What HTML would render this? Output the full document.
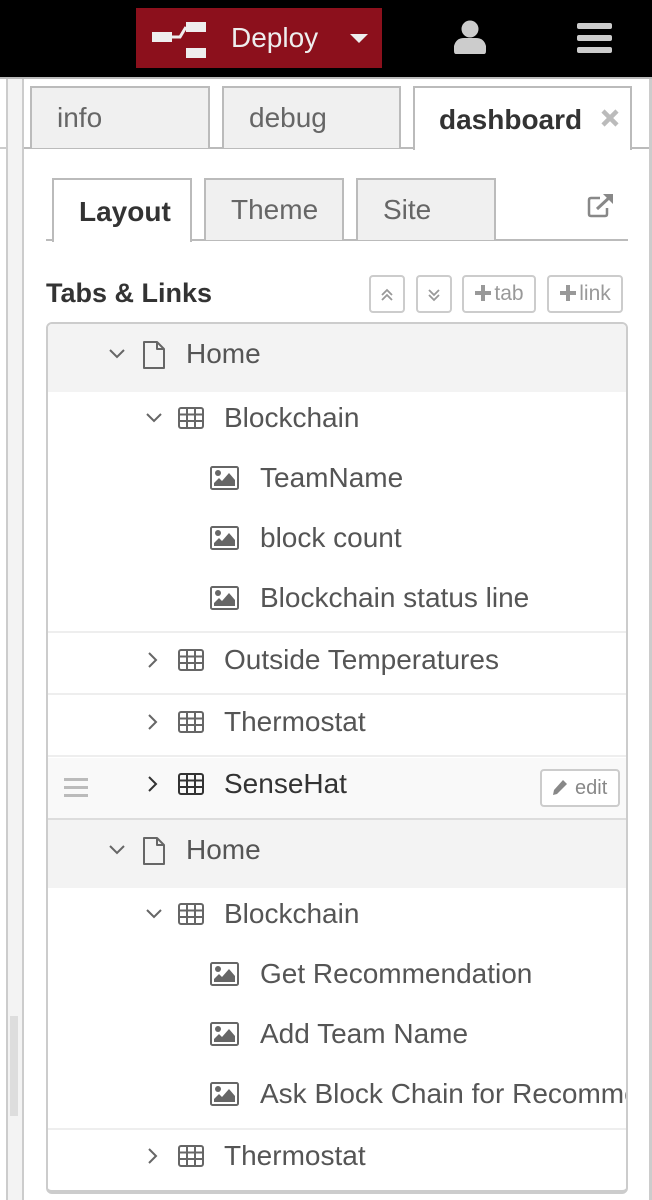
<!DOCTYPE html>
<html><head><meta charset="utf-8"><style>
*{margin:0;padding:0;box-sizing:border-box}
body{width:652px;height:1200px;overflow:hidden;background:#fff;font-family:"Liberation Sans",Arial,sans-serif;position:relative;color:#555}
.a{position:absolute}
.t{position:absolute;height:32px;line-height:32px;font-size:28px;color:#555;white-space:nowrap}
.tab{position:absolute;background:#f0f0f0;border:2px solid #bbb;border-bottom:none;font-size:28px;color:#666;line-height:60px}
.btn{position:absolute;top:275px;height:38px;border:2px solid #ccc;border-radius:4px;background:#fff;color:#999;font-size:21px;line-height:34px;text-align:center}
.sep{position:absolute;left:48px;width:578px;height:2px;background:#eee}
</style></head><body>
<div class="a" style="left:0;top:0;width:652px;height:77px;background:#000"></div>
<div class="a" style="left:0;top:77px;width:652px;height:2px;background:#bbb"></div>
<div class="a" style="left:136px;top:8px;width:246px;height:60px;background:#8c101c"></div>
<svg class="a" style="left:150px;top:20px" width="60" height="40" viewBox="0 0 60 40"><rect x="2" y="12" width="20" height="10" fill="#eee"/><rect x="36" y="2" width="20" height="10" fill="#eee"/><rect x="36" y="28" width="20" height="10" fill="#eee"/><path d="M22 17 L30 17 L36 7" stroke="#eee" stroke-width="3" fill="none"/></svg>
<div class="a" style="left:231px;top:20px;font-size:28px;color:#eee;line-height:36px">Deploy</div>
<svg class="a" style="left:349px;top:33px" width="20" height="12"><path d="M1 1 L19 1 L10 10 Z" fill="#eee"/></svg>
<svg class="a" style="left:454px;top:20px" width="32" height="36" viewBox="0 0 32 36"><circle cx="16" cy="9" r="8.5" fill="#ccc"/><path d="M2 34 Q0 34 0 31 L0 26 Q2 18 10 18 L22 18 Q30 18 32 26 L32 31 Q32 34 30 34 Z" fill="#ccc"/></svg>
<div class="a" style="left:577px;top:23px;width:35px;height:6px;background:#ccc;border-radius:2px"></div>
<div class="a" style="left:577px;top:35px;width:35px;height:6px;background:#ccc;border-radius:2px"></div>
<div class="a" style="left:577px;top:47px;width:35px;height:6px;background:#ccc;border-radius:2px"></div>
<div class="a" style="left:6px;top:79px;width:2px;height:1121px;background:#ccc"></div>
<div class="a" style="left:8px;top:79px;width:14px;height:1121px;background:#f3f3f3"></div>
<div class="a" style="left:22px;top:79px;width:2px;height:1121px;background:#ccc"></div>
<div class="a" style="left:0;top:147px;width:6px;height:2px;background:#ccc"></div>
<div class="a" style="left:10px;top:1016px;width:8px;height:100px;background:#ddd"></div>
<div class="a" style="left:649px;top:79px;width:3px;height:1121px;background:#ccc"></div>
<div class="a" style="left:24px;top:147px;width:625px;height:2px;background:#bbb"></div>
<div class="tab" style="left:30px;top:86px;width:180px;height:62px;padding-left:25px">info</div>
<div class="tab" style="left:222px;top:86px;width:179px;height:62px;padding-left:25px">debug</div>
<div class="tab" style="left:413px;top:86px;width:219px;height:64px;padding-left:24px;background:#fff;color:#333;font-weight:bold;line-height:64px">dashboard</div>
<svg class="a" style="left:600px;top:108px" width="20" height="20"><path d="M3 3 L17 17 M17 3 L3 17" stroke="#bbb" stroke-width="4.5"/></svg>
<div class="a" style="left:46px;top:239px;width:582px;height:2px;background:#bbb"></div>
<div class="tab" style="left:52px;top:178px;width:140px;height:64px;background:#fff;color:#333;font-weight:bold;padding-left:25px;line-height:64px">Layout</div>
<div class="tab" style="left:204px;top:178px;width:140px;height:62px;padding-left:25px">Theme</div>
<div class="tab" style="left:356px;top:178px;width:140px;height:62px;padding-left:25px">Site</div>
<svg class="a" style="left:587px;top:193px" width="28" height="26" viewBox="0 0 28 26"><path d="M13 5 L4 5 Q2 5 2 7 L2 21 Q2 23 4 23 L18 23 Q20 23 20 21 L20 15" stroke="#888" stroke-width="2.5" fill="none"/><path d="M10 16 L24 3" stroke="#888" stroke-width="3"/><path d="M16 1 L26 1 L26 11 Z" fill="#888"/></svg>
<div class="a" style="left:46px;top:277px;font-size:27px;font-weight:bold;color:#333;line-height:32px">Tabs &amp; Links</div>
<div class="btn" style="left:369px;width:36px"><svg width="14" height="16" style="margin-top:10px" viewBox="0 0 14 16"><path d="M2 8 L7 3 L12 8 M2 13 L7 8 L12 13" stroke="#999" stroke-width="1.8" fill="none"/></svg></div>
<div class="btn" style="left:416px;width:36px"><svg width="14" height="16" style="margin-top:10px" viewBox="0 0 14 16"><path d="M2 3 L7 8 L12 3 M2 8 L7 13 L12 8" stroke="#999" stroke-width="1.8" fill="none"/></svg></div>
<div class="btn" style="left:462px;width:74px"><svg width="18" height="18" style="vertical-align:-2px;margin-right:2px"><path d="M9 1V17M1 9H17" stroke="#999" stroke-width="4"/></svg>tab</div>
<div class="btn" style="left:547px;width:76px"><svg width="18" height="18" style="vertical-align:-2px;margin-right:2px"><path d="M9 1V17M1 9H17" stroke="#999" stroke-width="4"/></svg>link</div>
<div class="a" style="left:46px;top:322px;width:582px;height:872px;border:2px solid #ccc;border-bottom-width:4px;border-radius:6px;overflow:hidden">
<div class="a" style="left:0;top:0;width:578px;height:68px;background:#f3f3f3"></div>
<div class="a" style="left:0;top:434px;width:578px;height:62px;background:#f9f9f9;border-bottom:2px solid #ddd"></div>
<div class="a" style="left:0;top:496px;width:578px;height:68px;background:#f3f3f3"></div>
</div>
<div class="sep" style="top:631px"></div>
<div class="sep" style="top:693px"></div>
<div class="sep" style="top:755px"></div>
<div class="sep" style="top:1128px"></div>

<svg class="a" style="left:108px;top:348px" width="18" height="12"><path d="M2 2 L9 9 L16 2" stroke="#666" stroke-width="2" fill="none"/></svg>
<svg class="a" style="left:142px;top:340px" width="24" height="30" viewBox="0 0 24 30"><path d="M2 2 L15 2 L22 9 L22 28 L2 28 Z M15 2 L15 9 L22 9" stroke="#666" stroke-width="2" fill="none" stroke-linejoin="round"/></svg>
<div class="t" style="left:186px;top:338px">Home</div>
<svg class="a" style="left:145px;top:412px" width="18" height="12"><path d="M2 2 L9 9 L16 2" stroke="#666" stroke-width="2" fill="none"/></svg>
<svg class="a" style="left:178px;top:407px" width="26" height="22" viewBox="0 0 26 22"><rect x="1" y="1" width="24" height="20" rx="2" stroke="#666" stroke-width="2" fill="none"/><path d="M1 7.5H25M1 14H25M9 1V21M17 1V21" stroke="#666" stroke-width="2"/></svg>
<div class="t" style="left:224px;top:402px">Blockchain</div>
<svg class="a" style="left:210px;top:466px" width="29" height="24" viewBox="0 0 29 24"><rect x="1" y="1" width="27" height="22" rx="1.5" stroke="#666" stroke-width="2" fill="none"/><circle cx="8" cy="7" r="3" fill="#666"/><path d="M4 20 L4 17 L9 12 L12 15 L19 7 L25 14 L25 20 Z" fill="#666"/></svg>
<div class="t" style="left:260px;top:462px">TeamName</div>
<svg class="a" style="left:210px;top:526px" width="29" height="24" viewBox="0 0 29 24"><rect x="1" y="1" width="27" height="22" rx="1.5" stroke="#666" stroke-width="2" fill="none"/><circle cx="8" cy="7" r="3" fill="#666"/><path d="M4 20 L4 17 L9 12 L12 15 L19 7 L25 14 L25 20 Z" fill="#666"/></svg>
<div class="t" style="left:260px;top:522px">block count</div>
<svg class="a" style="left:210px;top:586px" width="29" height="24" viewBox="0 0 29 24"><rect x="1" y="1" width="27" height="22" rx="1.5" stroke="#666" stroke-width="2" fill="none"/><circle cx="8" cy="7" r="3" fill="#666"/><path d="M4 20 L4 17 L9 12 L12 15 L19 7 L25 14 L25 20 Z" fill="#666"/></svg>
<div class="t" style="left:260px;top:582px">Blockchain status line</div>
<svg class="a" style="left:147px;top:651px" width="12" height="18"><path d="M2 2 L9 9 L2 16" stroke="#666" stroke-width="2" fill="none"/></svg>
<svg class="a" style="left:178px;top:649px" width="26" height="22" viewBox="0 0 26 22"><rect x="1" y="1" width="24" height="20" rx="2" stroke="#666" stroke-width="2" fill="none"/><path d="M1 7.5H25M1 14H25M9 1V21M17 1V21" stroke="#666" stroke-width="2"/></svg>
<div class="t" style="left:224px;top:644px">Outside Temperatures</div>
<svg class="a" style="left:147px;top:713px" width="12" height="18"><path d="M2 2 L9 9 L2 16" stroke="#666" stroke-width="2" fill="none"/></svg>
<svg class="a" style="left:178px;top:711px" width="26" height="22" viewBox="0 0 26 22"><rect x="1" y="1" width="24" height="20" rx="2" stroke="#666" stroke-width="2" fill="none"/><path d="M1 7.5H25M1 14H25M9 1V21M17 1V21" stroke="#666" stroke-width="2"/></svg>
<div class="t" style="left:224px;top:706px">Thermostat</div>
<div class="a" style="left:64px;top:778px;width:24px;height:3px;background:#bbb"></div>
<div class="a" style="left:64px;top:786px;width:24px;height:3px;background:#bbb"></div>
<div class="a" style="left:64px;top:794px;width:24px;height:3px;background:#bbb"></div>
<svg class="a" style="left:147px;top:775px" width="12" height="18"><path d="M2 2 L9 9 L2 16" stroke="#333" stroke-width="2" fill="none"/></svg>
<svg class="a" style="left:178px;top:773px" width="26" height="22" viewBox="0 0 26 22"><rect x="1" y="1" width="24" height="20" rx="2" stroke="#333" stroke-width="2" fill="none"/><path d="M1 7.5H25M1 14H25M9 1V21M17 1V21" stroke="#333" stroke-width="2"/></svg>
<div class="t" style="left:224px;top:768px;color:#333">SenseHat</div>
<div class="a" style="left:540px;top:769px;width:80px;height:38px;border:2px solid #ccc;border-radius:4px;background:#fff;font-size:20px;line-height:34px;color:#888;padding-left:33px">edit</div>
<svg class="a" style="left:551px;top:777px" width="18" height="20" viewBox="0 0 18 20"><path d="M2 18 L3 13 L12 3 L16 7 L6 17 Z" fill="#888"/></svg>
<svg class="a" style="left:108px;top:844px" width="18" height="12"><path d="M2 2 L9 9 L16 2" stroke="#666" stroke-width="2" fill="none"/></svg>
<svg class="a" style="left:142px;top:836px" width="24" height="30" viewBox="0 0 24 30"><path d="M2 2 L15 2 L22 9 L22 28 L2 28 Z M15 2 L15 9 L22 9" stroke="#666" stroke-width="2" fill="none" stroke-linejoin="round"/></svg>
<div class="t" style="left:186px;top:834px">Home</div>
<svg class="a" style="left:145px;top:908px" width="18" height="12"><path d="M2 2 L9 9 L16 2" stroke="#666" stroke-width="2" fill="none"/></svg>
<svg class="a" style="left:178px;top:903px" width="26" height="22" viewBox="0 0 26 22"><rect x="1" y="1" width="24" height="20" rx="2" stroke="#666" stroke-width="2" fill="none"/><path d="M1 7.5H25M1 14H25M9 1V21M17 1V21" stroke="#666" stroke-width="2"/></svg>
<div class="t" style="left:224px;top:898px">Blockchain</div>
<svg class="a" style="left:210px;top:962px" width="29" height="24" viewBox="0 0 29 24"><rect x="1" y="1" width="27" height="22" rx="1.5" stroke="#666" stroke-width="2" fill="none"/><circle cx="8" cy="7" r="3" fill="#666"/><path d="M4 20 L4 17 L9 12 L12 15 L19 7 L25 14 L25 20 Z" fill="#666"/></svg>
<div class="t" style="left:260px;top:958px">Get Recommendation</div>
<svg class="a" style="left:210px;top:1022px" width="29" height="24" viewBox="0 0 29 24"><rect x="1" y="1" width="27" height="22" rx="1.5" stroke="#666" stroke-width="2" fill="none"/><circle cx="8" cy="7" r="3" fill="#666"/><path d="M4 20 L4 17 L9 12 L12 15 L19 7 L25 14 L25 20 Z" fill="#666"/></svg>
<div class="t" style="left:260px;top:1018px">Add Team Name</div>
<svg class="a" style="left:210px;top:1082px" width="29" height="24" viewBox="0 0 29 24"><rect x="1" y="1" width="27" height="22" rx="1.5" stroke="#666" stroke-width="2" fill="none"/><circle cx="8" cy="7" r="3" fill="#666"/><path d="M4 20 L4 17 L9 12 L12 15 L19 7 L25 14 L25 20 Z" fill="#666"/></svg>
<div class="a" style="left:260px;top:1078px;width:366px;height:32px;overflow:hidden"><div class="t" style="position:static">Ask Block Chain for Recommendation</div></div>
<svg class="a" style="left:147px;top:1147px" width="12" height="18"><path d="M2 2 L9 9 L2 16" stroke="#666" stroke-width="2" fill="none"/></svg>
<svg class="a" style="left:178px;top:1145px" width="26" height="22" viewBox="0 0 26 22"><rect x="1" y="1" width="24" height="20" rx="2" stroke="#666" stroke-width="2" fill="none"/><path d="M1 7.5H25M1 14H25M9 1V21M17 1V21" stroke="#666" stroke-width="2"/></svg>
<div class="t" style="left:224px;top:1140px">Thermostat</div>
</body></html>
